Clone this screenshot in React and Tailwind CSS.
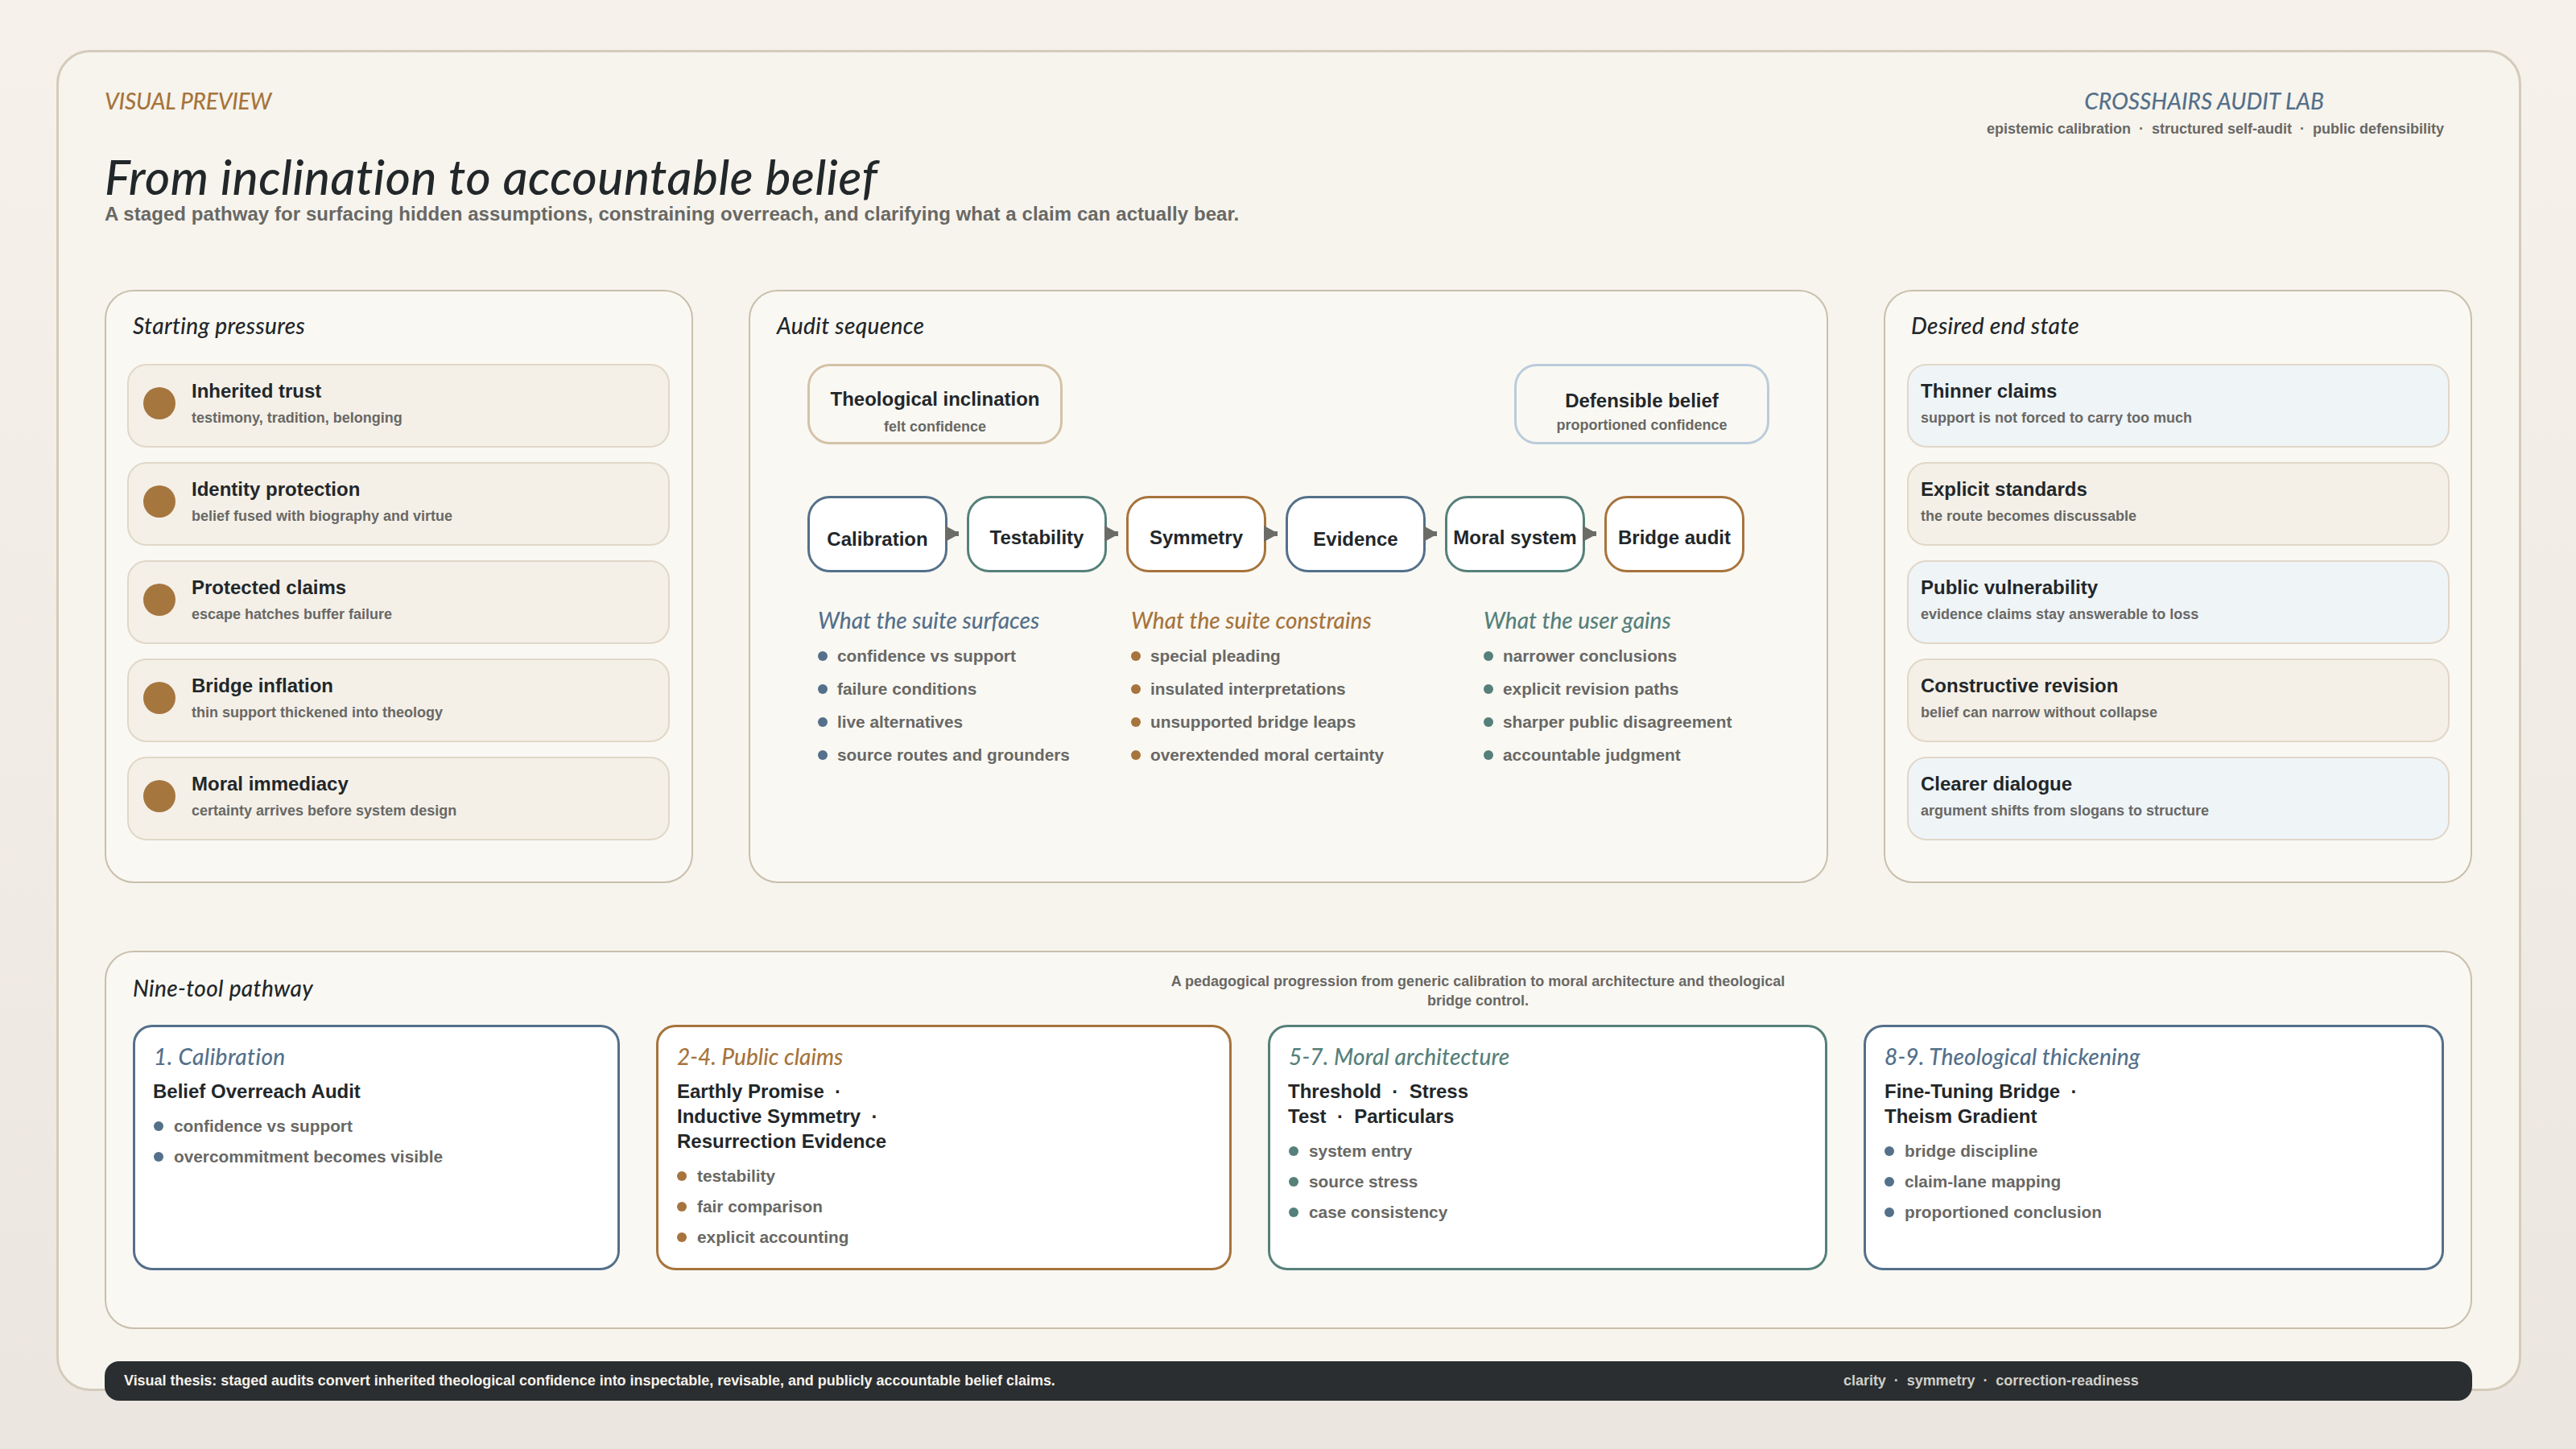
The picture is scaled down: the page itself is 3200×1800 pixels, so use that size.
const SANS = "font-['Liberation_Sans',Arial,sans-serif]";
const FUT = "font-['Lato',sans-serif] italic font-medium";

const starts = [
  ["Inherited trust", "testimony, tradition, belonging"],
  ["Identity protection", "belief fused with biography and virtue"],
  ["Protected claims", "escape hatches buffer failure"],
  ["Bridge inflation", "thin support thickened into theology"],
  ["Moral immediacy", "certainty arrives before system design"],
];
const ends = [
  ["Thinner claims", "support is not forced to carry too much", "bg-[#eff4f7]"],
  ["Explicit standards", "the route becomes discussable", "bg-[#f4f0e8]"],
  ["Public vulnerability", "evidence claims stay answerable to loss", "bg-[#eff4f7]"],
  ["Constructive revision", "belief can narrow without collapse", "bg-[#f4f0e8]"],
  ["Clearer dialogue", "argument shifts from slogans to structure", "bg-[#eff4f7]"],
];
const steps = [
  ["Calibration", "border-[#54708a]", "pt-[36px]"],
  ["Testability", "border-[#56807a]", "pt-[34px]"],
  ["Symmetry", "border-[#a6743c]", "pt-[34px]"],
  ["Evidence", "border-[#54708a]", "pt-[36px]"],
  ["Moral system", "border-[#56807a]", "pt-[34px]"],
  ["Bridge audit", "border-[#a6743c]", "pt-[34px]"],
];
const cols = [
  { t: "What the suite surfaces", c: "text-[#54708a]", d: "bg-[#54708a]", w: "w-[389px]", items: ["confidence vs support", "failure conditions", "live alternatives", "source routes and grounders"] },
  { t: "What the suite constrains", c: "text-[#a6743c]", d: "bg-[#a6743c]", w: "w-[438px]", items: ["special pleading", "insulated interpretations", "unsupported bridge leaps", "overextended moral certainty"] },
  { t: "What the user gains", c: "text-[#56807a]", d: "bg-[#56807a]", w: "w-[400px]", items: ["narrower conclusions", "explicit revision paths", "sharper public disagreement", "accountable judgment"] },
];
const cards = [
  { t: "1. Calibration", lines: ["Belief Overreach Audit"], items: ["confidence vs support", "overcommitment becomes visible"], b: "border-[#54708a]", c: "text-[#54708a]", d: "bg-[#54708a]", w: "w-[605px]", n: "-ml-[1px]", track: "tracking-[0.4px]" },
  { t: "2-4. Public claims", lines: ["Earthly Promise  ·", "Inductive Symmetry  ·", "Resurrection Evidence"], items: ["testability", "fair comparison", "explicit accounting"], b: "border-[#a6743c]", c: "text-[#a6743c]", d: "bg-[#a6743c]", w: "w-[715px]", n: "", track: "tracking-[0px]" },
  { t: "5-7. Moral architecture", lines: ["Threshold  ·  Stress", "Test  ·  Particulars"], items: ["system entry", "source stress", "case consistency"], b: "border-[#56807a]", c: "text-[#56807a]", d: "bg-[#56807a]", w: "w-[695px]", n: "-ml-[1px]", track: "tracking-[0.15px]" },
  { t: "8-9. Theological thickening", lines: ["Fine-Tuning Bridge  ·", "Theism Gradient"], items: ["bridge discipline", "claim-lane mapping", "proportioned conclusion"], b: "border-[#54708a]", c: "text-[#54708a]", d: "bg-[#54708a]", w: "w-[721px]", n: "", track: "tracking-[0.15px]" },
];

function Arrow() {
  return (
    <svg className="absolute right-[-17px] top-[34px] z-10" width="17" height="20" viewBox="0 0 17 20">
      <path d="M0 0 L13 7 L17 7 L17 13 L13 13 L0 20 Z" fill="#6b6b68" />
    </svg>
  );
}

function PanelTitle({ children }) {
  return <div className={`${FUT} h-[36px] text-[28px] leading-[36px] tracking-[0.35px] text-[#22272a]`}>{children}</div>;
}

function Item({ title, sub, bg, dot }) {
  return (
    <div className={`flex h-[104px] items-center rounded-[24px] border-[2px] border-[#e0d7c8] pb-[6px] ${bg}`}>
      {dot && <div className="ml-[18px] mr-[20px] h-[40px] w-[40px] shrink-0 rounded-full bg-[#a6763f]" />}
      <div className={dot ? "" : "pl-[15px]"}>
        <div className="text-[24px] font-bold leading-[30px] text-[#22272a]">{title}</div>
        <div className="mt-[6px] text-[18px] font-bold leading-[24px] text-[#686865]">{sub}</div>
      </div>
    </div>
  );
}

function Side({ title, pad, titlePad, children }) {
  return (
    <section className={`h-[737px] w-[731px] rounded-[36px] border-2 border-[#c9bfac] bg-[#faf8f3] pt-[24px] ${pad}`}>
      <div className={titlePad}><PanelTitle>{title}</PanelTitle></div>
      <div className="mt-[30px] flex flex-col gap-[18px]">{children}</div>
    </section>
  );
}

export default function App() {
  return (
    <div className={`${SANS} h-[1800px] w-[3200px] overflow-hidden bg-gradient-to-b from-[#f6f2eb] to-[#ebe6df] pl-[70px] pt-[62px]`}>
      <main className="h-[1666px] w-[3062px] rounded-[42px] border-[3px] border-[#d4cbbc] bg-[#f7f4ed] px-[57px]">
        <header className="flex h-[295px] justify-between pt-[42px]">
          <div>
            <div className={`${FUT} text-[28px] leading-[36px] tracking-[-0.2px] text-[#a6743c]`}>VISUAL PREVIEW</div>
            <h1 className={`${FUT} mt-[40px] text-[60px] leading-[72px] tracking-[0.6px] text-[#22272a]`}>From inclination to accountable belief</h1>
            <p className="mt-[-4px] text-[24px] font-bold leading-[30px] tracking-[0.07px] text-[#686865]">A staged pathway for surfacing hidden assumptions, constraining overreach, and clarifying what a claim can actually bear.</p>
          </div>
          <div className="mr-[36px] text-right">
            <div className={`${FUT} mr-[149px] text-[28px] leading-[36px] text-[#54708a]`}>CROSSHAIRS AUDIT LAB</div>
            <div className="mt-[5px] whitespace-pre text-[18px] font-bold leading-[24px] text-[#686865]">epistemic calibration  ·  structured self-audit  ·  public defensibility</div>
          </div>
        </header>

        <div className="flex gap-[69px]">
          <Side title="Starting pressures" pad="pl-[26px] pr-[27px]" titlePad="pl-[7px]">
            {starts.map(([a, b]) => <Item key={a} title={a} sub={b} bg="bg-[#f4f0e8]" dot />)}
          </Side>

          <section className="h-[737px] w-[1341px] rounded-[36px] border-2 border-[#c9bfac] bg-[#faf8f3] pt-[24px]">
            <div className="pl-[33px]"><PanelTitle>Audit sequence</PanelTitle></div>
            <div className="mx-[71px] mt-[30px] flex justify-between">
              <div className="flex h-[100px] w-[317px] flex-col items-center rounded-[28px] border-[3px] border-[#d4c2a8] pt-[26px]">
                <div className="text-[24px] font-bold leading-[30px] text-[#22272a]">Theological inclination</div>
                <div className="mt-[7px] text-[18px] font-bold leading-[24px] text-[#686865]">felt confidence</div>
              </div>
              <div className="flex h-[100px] w-[317px] flex-col items-center rounded-[28px] border-[3px] border-[#b9ccdb] pt-[28px]">
                <div className="text-[24px] font-bold leading-[30px] text-[#22272a]">Defensible belief</div>
                <div className="mt-[3px] text-[18px] font-bold leading-[24px] text-[#686865]">proportioned confidence</div>
              </div>
            </div>
            <div className="ml-[71px] mt-[64px] flex gap-[24px]">
              {steps.map(([s, b, p], i) => (
                <div key={s} className={`relative flex h-[95px] w-[174px] justify-center rounded-[28px] border-[3px] bg-white ${b} ${p}`}>
                  <span className="whitespace-nowrap text-[24px] font-bold leading-[30px] text-[#22272a]">{s}</span>
                  {i < steps.length - 1 && <Arrow />}
                </div>
              ))}
            </div>
            <div className="ml-[84px] mt-[41px] flex">
              {cols.map((c) => (
                <div key={c.t} className={c.w}>
                  <div className={`${FUT} text-[28px] leading-[36px] ${c.c}`}>{c.t}</div>
                  <ul className="mt-[12px] flex flex-col gap-[11px]">
                    {c.items.map((x) => (
                      <li key={x} className="flex h-[30px] items-center text-[20.8px] font-bold text-[#686865]">
                        <span className={`mr-[12px] h-[12px] w-[12px] shrink-0 rounded-full ${c.d}`} />{x}
                      </li>
                    ))}
                  </ul>
                </div>
              ))}
            </div>
          </section>

          <Side title="Desired end state" pad="pl-[27px] pr-[26px]" titlePad="pl-[5px]">
            {ends.map(([a, b, bg]) => <Item key={a} title={a} sub={b} bg={bg} />)}
          </Side>
        </div>

        <section className="mt-[84px] h-[470px] w-[2941px] rounded-[36px] border-2 border-[#c9bfac] bg-[#faf8f3] px-[33px]">
          <div className="relative h-[90px]">
            <div className="pt-[26px]"><PanelTitle>Nine-tool pathway</PanelTitle></div>
            <p className="absolute left-[1271px] top-[24px] w-[800px] text-center text-[18px] font-bold leading-[24px] text-[#686865]">A pedagogical progression from generic calibration to moral architecture and theological bridge control.</p>
          </div>
          <div className="flex gap-[45px]">
            {cards.map((c) => (
              <div key={c.t} className={`h-[305px] ${c.w} rounded-[24px] border-[3px] bg-white pl-[23px] pt-[18px] ${c.b}`}>
                <div className={`${FUT} text-[28px] leading-[36px] ${c.track} ${c.c}`}>{c.t}</div>
                <div className={`mt-[10px] whitespace-pre text-[24px] font-bold leading-[31px] text-[#22272a] ${c.n}`}>
                  {c.lines.map((l) => <div key={l}>{l}</div>)}
                </div>
                <ul className="mt-[13px] flex flex-col gap-[8px]">
                  {c.items.map((x) => (
                    <li key={x} className="flex h-[30px] items-center text-[20.8px] font-bold text-[#686865]">
                      <span className={`mr-[13px] h-[12px] w-[12px] shrink-0 rounded-full ${c.d}`} />{x}
                    </li>
                  ))}
                </ul>
              </div>
            ))}
          </div>
        </section>

        <footer className="relative mt-[40px] flex h-[49px] w-[2941px] items-center rounded-[18px] bg-[#2a2e31] pl-[24px] text-[18px] font-bold">
          <span className="tracking-[-0.03px] text-[#f5f1ea]">Visual thesis: staged audits convert inherited theological confidence into inspectable, revisable, and publicly accountable belief claims.</span>
          <span className="absolute left-[2160px] whitespace-pre tracking-[-0.03px] text-[#d0cec9]">clarity  ·  symmetry  ·  correction-readiness</span>
        </footer>
      </main>
    </div>
  );
}
